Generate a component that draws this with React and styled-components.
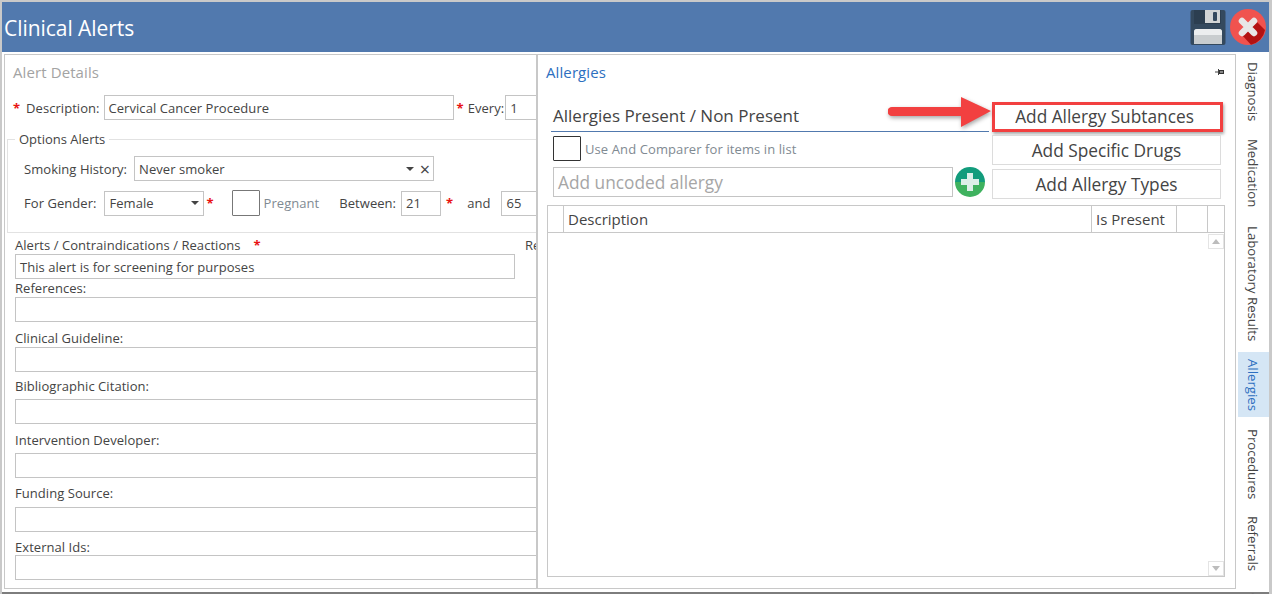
import React from "react";
import styled, { createGlobalStyle } from "styled-components";

const Global = createGlobalStyle`
  html, body { margin: 0; padding: 0; background: #fff; }
  * { box-sizing: border-box; }
  body { font-family: "Open Sans", "Liberation Sans", sans-serif; color: #444; }
`;

const Window = styled.div`
  width: 1272px;
  height: 594px;
  overflow: hidden;
  display: flex;
  flex-direction: column;
  background: #fff;
  border: solid #c9c9c9;
  border-width: 2px 3px 0 2px;
`;

const TitleBar = styled.header`
  height: 50px;
  flex: none;
  background: #5179ae;
  display: flex;
  align-items: center;
  padding: 0 0 0 2px;
`;

const Title = styled.h1`
  flex: 1;
  margin: 0;
  padding-top: 2px;
  font-size: 21px;
  font-weight: 400;
  letter-spacing: -0.05px;
  color: #fff;
`;

const TitleIcons = styled.div`
  display: flex;
  align-items: center;
  gap: 4px;
  padding: 0 3px 0 0;
`;

const Body = styled.div`
  flex: 1;
  min-height: 0;
  display: flex;
  padding: 2px 0 0 2px;
  border-bottom: 2px solid #7d7d7d;
`;

const LeftPanel = styled.section`
  width: 533px;
  height: 535px;
  flex: none;
  overflow: hidden;
  border: 1px solid #c8c8c8;
  padding: 7px 0 0 8px;
`;

const PanelTitle = styled.div`
  font-size: 15px;
  line-height: 20px;
  letter-spacing: 0.1px;
  color: ${(p) => p.$color};
`;

const Row = styled.div`
  display: flex;
  align-items: center;
  white-space: nowrap;
  height: ${(p) => p.$h}px;
  margin: ${(p) => p.$m || "0"};
`;

const Label = styled.span`
  font-size: 13px;
  letter-spacing: 0.05px;
  color: ${(p) => p.$muted ? "#7f8a92" : "#444"};
  margin: ${(p) => p.$m || "0"};
  flex: none;
`;

const Star = styled.span`
  color: #e81313;
  font-size: 13px;
  font-weight: 700;
  margin: ${(p) => p.$m || "0"};
  flex: none;
`;

const Field = styled.div`
  flex: none;
  display: flex;
  align-items: center;
  width: ${(p) => p.$w}px;
  height: 25px;
  margin: ${(p) => p.$m || "0"};
  border: 1px solid #c4c4c4;
  padding: 0 ${(p) => p.$pr || 4}px 0 4px;
  font-size: 13px;
  letter-spacing: 0.05px;
  color: #444;
  background: #fff;
`;

const Spacer = styled.span`
  flex: 1;
`;

const Caret = styled.span`
  width: 0;
  height: 0;
  flex: none;
  border-left: 4px solid transparent;
  border-right: 4px solid transparent;
  border-top: 4px solid #444;
`;

const Clear = styled.span`
  font-size: 18px;
  line-height: 18px;
  margin: 0 0 0 6px;
  color: #444;
`;

const OptionsGroup = styled.fieldset`
  margin: 12px 0 0 -6px;
  padding: 0 0 0 16px;
  height: 101px;
  width: 540px;
  border: 1px solid #e2e2e2;
  border-right: 0;
  legend {
    padding: 0 4px;
    margin-left: -9px;
    font-size: 13px;
    line-height: 14px;
    color: #444;
  }
`;

const Check = styled.span`
  flex: none;
  width: 28px;
  height: ${(p) => p.$h}px;
  border: 1px solid ${(p) => p.$dark ? "#333" : "#777"};
  border-radius: 1px;
  background: #fff;
  margin: ${(p) => p.$m || "0"};
`;

const Stack = styled.div`
  margin: 0 0 0 2px;
`;

const FieldLabel = styled.div`
  font-size: 13px;
  letter-spacing: 0.05px;
  line-height: 17px;
  color: #444;
  margin: ${(p) => p.$mt}px 0 ${(p) => p.$mb || 0}px;
  white-space: nowrap;
  display: flex;
`;

const LabelHead = styled.span`
  width: 510px;
  flex: none;
`;

const RightPanel = styled.section`
  position: relative;
  width: 699px;
  height: 535px;
  flex: none;
  border: 1px solid #c8c8c8;
  padding: 7px 9px 0 8px;
`;

const TitleRow = styled.div`
  display: flex;
  align-items: center;
  justify-content: space-between;
  padding-right: 2px;
`;

const FormGrid = styled.div`
  display: flex;
  margin: 20px 0 0 5px;
`;

const FormLeft = styled.div`
  width: 438px;
  margin-right: 3px;
  flex: none;
`;

const SectionHeading = styled.div`
  height: 30px;
  border-bottom: 1px solid #5179ae;
  font-size: 17px;
  line-height: 28px;
  padding-left: 2px;
  color: #444;
`;

const CheckText = styled.span`
  font-size: 13px;
  letter-spacing: 0.1px;
  color: #7f8a92;
  margin-left: 4px;
`;

const UncodedInput = styled.div`
  width: 400px;
  height: 30px;
  margin-left: 2px;
  flex: none;
  border: 1px solid #c4c4c4;
  padding: 0 4px;
  display: flex;
  align-items: center;
  font-size: 17.3px;
  color: #a6a6a6;
`;

const Buttons = styled.div`
  display: flex;
  flex-direction: column;
  width: 229px;
`;

const ActionButton = styled.div`
  display: flex;
  align-items: center;
  justify-content: center;
  height: 30px;
  margin-top: ${(p) => p.$mt || 0}px;
  margin-right: ${(p) => p.$marked ? "-2px" : "0"};
  padding: ${(p) => p.$marked ? "0 6px 2px 0" : "0"};
  border: ${(p) => p.$marked ? "3px solid #f24040" : "1px solid #dcdcdc"};
  box-shadow: ${(p) => p.$marked ? "1px 2px 3px rgba(0,0,0,.35)" : "none"};
  font-size: 17.3px;
  color: #444;
  background: #fff;
`;

const Grid = styled.div`
  width: 678px;
  height: 372px;
  margin: 6px 0 0 1px;
  border: 1px solid #c8c8c8;
  display: flex;
  flex-direction: column;
`;

const GridHead = styled.div`
  flex: none;
  height: 27px;
  display: grid;
  grid-template-columns: 16px 528px 85px 31px 1fr;
  border-bottom: 1px solid #c8c8c8;
`;

const HeadCell = styled.div`
  border-right: 1px solid #c8c8c8;
  padding-left: 4px;
  font-size: 15px;
  line-height: 27px;
  color: #444;
  &:last-child { border-right: 0; }
`;

const GridBody = styled.div`
  flex: 1;
  display: flex;
  flex-direction: column;
  justify-content: space-between;
  align-items: flex-end;
  padding: 1px 0 0 0;
`;

const ScrollButton = styled.div`
  width: 16px;
  height: 15px;
  border: 1px solid #e4e4e4;
  display: flex;
  align-items: center;
  justify-content: center;
  &::after {
    content: "";
    border-left: 4px solid transparent;
    border-right: 4px solid transparent;
    ${(p) => p.$up ? "border-bottom" : "border-top"}: 5px solid #bcbcbc;
  }
`;

const MarkArrow = styled.svg`
  position: absolute;
  left: 350px;
  top: 42px;
  filter: drop-shadow(1px 2px 2px rgba(0, 0, 0, 0.35));
`;

const Tabs = styled.nav`
  flex: 1;
  min-width: 0;
  overflow: hidden;
  height: 540px;
  display: flex;
  flex-direction: column;
  padding: 0 0 0 2px;
`;

const Tab = styled.div`
  flex: none;
  writing-mode: vertical-rl;
  width: 31px;
  height: ${(p) => p.$h}px;
  margin-top: ${(p) => p.$mt}px;
  padding-right: 2px;
  display: flex;
  align-items: center;
  justify-content: center;
  font-size: 13.2px;
  white-space: nowrap;
  color: ${(p) => p.$active ? "#2d6fc0" : "#444"};
  background: ${(p) => p.$active ? "#d5e6f5" : "transparent"};
`;

const SaveIcon = () => (
  <svg width="36" height="35" viewBox="0 0 36 35">
    <rect x="0.500" y="0" width="35" height="35" rx="2" fill="#34495e" />
    <rect x="4" y="0" width="27" height="14" fill="#2c3e50" />
    <rect x="15" y="0" width="15" height="13" fill="#d2d5d6" />
    <rect x="23" y="2" width="4" height="9" rx="1" fill="#34495e" />
    <path d="M4 34V22a3 3 0 0 1 3-3h22a3 3 0 0 1 3 3v12z" fill="#c9cdcf" />
    <path d="M4 25v-3a3 3 0 0 1 3-3h22a3 3 0 0 1 3 3v3z" fill="#eceeef" />
  </svg>
);

const CloseIcon = () => (
  <svg width="36" height="36" viewBox="0 0 36 36">
    <circle cx="18" cy="18" r="18" fill="#f0534f" />
    <path d="M11 25 L25 11 L35 21 A18 18 0 0 1 21 35.700z" fill="#b31212" />
    <path d="M12 12 L24 24 M24 12 L12 24" stroke="#e8e6e6" strokeWidth="6.500" strokeLinecap="round" />
  </svg>
);

const PlusIcon = () => (
  <svg width="30" height="30" viewBox="0 0 30 30" style={{ flex: "none", marginLeft: 2 }}>
    <path d="M0 15a15 15 0 0 1 30 0z" fill="#129c7c" />
    <path d="M0 15a15 15 0 0 0 30 0z" fill="#3fb25f" />
    <path d="M12 6h6v6h6v6h-6v6h-6v-6H6v-6h6z" fill="#dcefe8" />
  </svg>
);

const PinIcon = () => (
  <svg width="9" height="8" viewBox="0 0 9 8">
    <path d="M0 4h3" stroke="#444" />
    <path d="M3.500 1v6" stroke="#444" />
    <rect x="4.500" y="2.500" width="4" height="3" fill="#888" stroke="#333" />
  </svg>
);

const details = [
  { label: "References:", mt: 1 },
  { label: "Clinical Guideline:", mt: 8 },
  { label: "Bibliographic Citation:", mt: 6, mb: 4 },
  { label: "Intervention Developer:", mt: 8, mb: 4 },
  { label: "Funding Source:", mt: 7, mb: 5 },
  { label: "External Ids:", mt: 7, mb: -1 },
];

const tabs = [
  { label: "Diagnosis", h: 61, mt: 7 },
  { label: "Medication", h: 69, mt: 17 },
  { label: "Laboratory Results", h: 114, mt: 19 },
  { label: "Allergies", h: 65, mt: 11, active: true },
  { label: "Procedures", h: 69, mt: 13 },
  { label: "Referrals", h: 54, mt: 18 },
  { label: "Clinical", h: 54, mt: 17 },
];

export default function App() {
  return (
    <>
      <Global />
      <Window>
        <TitleBar>
          <Title>Clinical Alerts</Title>
          <TitleIcons>
            <SaveIcon />
            <CloseIcon />
          </TitleIcons>
        </TitleBar>
        <Body>
          <LeftPanel>
            <PanelTitle $color="#a3a3a3">Alert Details</PanelTitle>
            <Row $h={25} $m="13px 0 0 0">
              <Star>*</Star>
              <Label $m="0 4px 0 6px">Description:</Label>
              <Field $w={350}>Cervical Cancer Procedure</Field>
              <Star $m="0 0 0 3px">*</Star>
              <Label $m="0 1px 0 4px">Every:</Label>
              <Field $w={60}>1</Field>
            </Row>
            <OptionsGroup>
              <legend>Options Alerts</legend>
              <Row $h={25} $m="10px 0 0 0">
                <Label $m="0 7px 0 0">Smoking History:</Label>
                <Field $w={300} $pr={3}>
                  Never smoker
                  <Spacer />
                  <Caret />
                  <Clear>×</Clear>
                </Field>
              </Row>
              <Row $h={26} $m="9px 0 0 0">
                <Label $m="0 8px 0 0">For Gender:</Label>
                <Field $w={100}>
                  Female
                  <Spacer />
                  <Caret />
                </Field>
                <Star $m="0 0 0 2px">*</Star>
                <Check $h={26} $m="0 0 0 18px" />
                <Label $muted $m="0 0 0 4px">Pregnant</Label>
                <Label $m="0 5px 0 20px">Between:</Label>
                <Field $w={40}>21</Field>
                <Star $m="0 0 0 5px">*</Star>
                <Label $m="0 0 0 14px">and</Label>
                <Field $w={40} $m="0 0 0 11px">65</Field>
              </Row>
            </OptionsGroup>
            <Stack>
              <FieldLabel $mt={4}>
                <LabelHead>
                  Alerts / Contraindications / Reactions
                  <Star $m="0 0 0 13px">*</Star>
                </LabelHead>
                Re
              </FieldLabel>
              <Field $w={500}>This alert is for screening for purposes</Field>
              {details.map((d) => (
                <div key={d.label}>
                  <FieldLabel $mt={d.mt} $mb={d.mb}>{d.label}</FieldLabel>
                  <Field $w={540} />
                </div>
              ))}
            </Stack>
          </LeftPanel>
          <RightPanel>
            <TitleRow>
              <PanelTitle $color="#2d6fc0">Allergies</PanelTitle>
              <PinIcon />
            </TitleRow>
            <FormGrid>
              <FormLeft>
                <SectionHeading>Allergies Present / Non Present</SectionHeading>
                <Row $h={25} $m="4px 0 0 0">
                  <Check $h={25} $dark $m="0 0 0 2px" />
                  <CheckText>Use And Comparer for items in list</CheckText>
                </Row>
                <Row $h={30} $m="6px 0 0 0">
                  <UncodedInput>Add uncoded allergy</UncodedInput>
                  <PlusIcon />
                </Row>
              </FormLeft>
              <Buttons>
                <ActionButton $marked>Add Allergy Subtances</ActionButton>
                <ActionButton $mt={3}>Add Specific Drugs</ActionButton>
                <ActionButton $mt={4}>Add Allergy Types</ActionButton>
              </Buttons>
            </FormGrid>
            <Grid>
              <GridHead>
                <HeadCell />
                <HeadCell>Description</HeadCell>
                <HeadCell>Is Present</HeadCell>
                <HeadCell />
                <HeadCell />
              </GridHead>
              <GridBody>
                <ScrollButton $up />
                <ScrollButton />
              </GridBody>
            </Grid>
            <MarkArrow width="104" height="32" viewBox="0 0 104 32">
              <path d="M4 10H73V0L103 14L73 30V19H4a4.500 4.500 0 0 1 0-9z" fill="#f24040" />
            </MarkArrow>
          </RightPanel>
          <Tabs>
            {tabs.map((t) => (
              <Tab key={t.label} $h={t.h} $mt={t.mt} $active={t.active}>{t.label}</Tab>
            ))}
          </Tabs>
        </Body>
      </Window>
    </>
  );
}
